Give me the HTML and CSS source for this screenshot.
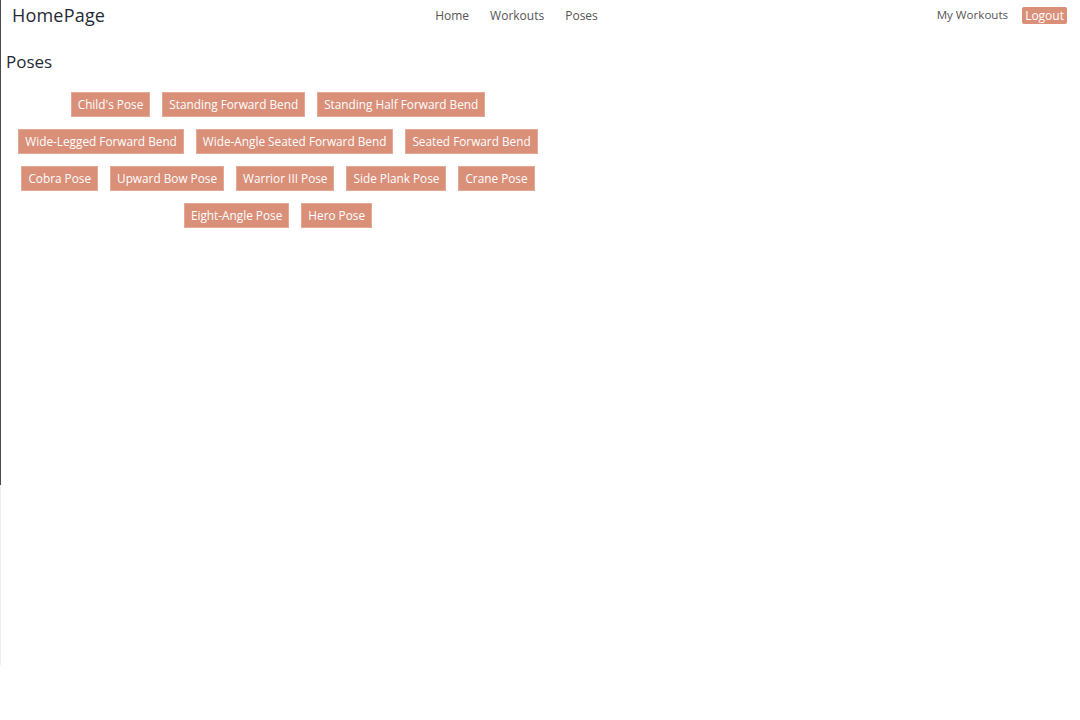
FILE: index.html
```html
<!DOCTYPE html>
<html lang="en">
<head>
<meta charset="utf-8">
<title>Poses</title>
<link rel="stylesheet" href="styles.css">
</head>
<body>
<div class="page">
  <nav class="navbar">
    <a class="brand" href="#">HomePage</a>
    <ul class="nav-center">
      <li><a href="#">Home</a></li>
      <li><a href="#">Workouts</a></li>
      <li><a href="#">Poses</a></li>
    </ul>
    <div class="nav-right">
      <a href="#" class="nav-link">My Workouts</a>
      <a href="#" class="logout">Logout</a>
    </div>
  </nav>
  <main class="content">
    <h2 class="title">Poses</h2>
    <div class="pose-list">
      <a href="#" class="pose">Child's Pose</a>
      <a href="#" class="pose">Standing Forward Bend</a>
      <a href="#" class="pose">Standing Half Forward Bend</a>
      <a href="#" class="pose">Wide-Legged Forward Bend</a>
      <a href="#" class="pose">Wide-Angle Seated Forward Bend</a>
      <a href="#" class="pose">Seated Forward Bend</a>
      <a href="#" class="pose">Cobra Pose</a>
      <a href="#" class="pose">Upward Bow Pose</a>
      <a href="#" class="pose">Warrior III Pose</a>
      <a href="#" class="pose">Side Plank Pose</a>
      <a href="#" class="pose">Crane Pose</a>
      <a href="#" class="pose">Eight-Angle Pose</a>
      <a href="#" class="pose">Hero Pose</a>
    </div>
  </main>
</div>
<div class="trail"></div>
</body>
</html>
```
FILE: styles.css
```css
* { box-sizing: border-box; }
html, body { margin: 0; padding: 0; background: #fff; }
body {
  font-family: "Open Sans", "Liberation Sans", sans-serif;
  color: #1f2a36;
}
a { text-decoration: none; }
.page {
  height: 485px;
  border-left: 1px solid #4a4a4a;
}
.trail {
  height: 180px;
  border-left: 1px solid #eeeeee;
}
.navbar {
  height: 30px;
  display: flex;
  align-items: center;
  padding: 0 13px 0 11px;
}
.brand {
  font-size: 18px;
  line-height: 24px;
  color: #1f2a36;
  flex: 1;
  letter-spacing: 0.2px;
}
.nav-center {
  list-style: none;
  margin: 0;
  padding: 0 46px 0 0;
  display: flex;
  gap: 21px;
  flex: 1;
  justify-content: center;
  align-items: center;
}
.nav-center li { display: block; line-height: 16px; }
.nav-center a {
  font-size: 12px;
  line-height: 16px;
  color: #555;
}
.nav-link {
  font-size: 11.6px;
  line-height: 16px;
  color: #555;
}
.nav-right {
  flex: 1;
  display: flex;
  justify-content: flex-end;
  align-items: center;
  gap: 14px;
}
.logout {
  background: #d98f78;
  color: #fff;
  font-size: 12px;
  padding: 0 3px;
  border-radius: 2px;
  height: 17px;
  line-height: 17px;
}
.content {
  padding: 0 5px;
}
.title {
  margin: 21px 0 13px 0;
  font-size: 17px;
  font-weight: 400;
  color: #1f2a36;
  line-height: 22px;
}
.pose-list {
  width: 544px;
  display: flex;
  flex-wrap: wrap;
  justify-content: center;
}
.pose {
  background: #d98f78;
  color: #fff;
  font-size: 11.8px;
  line-height: 15px;
  padding: 4px 6px;
  margin: 6px 6px;
  height: 25px;
  border: 1px solid #e3a994;
}
```
